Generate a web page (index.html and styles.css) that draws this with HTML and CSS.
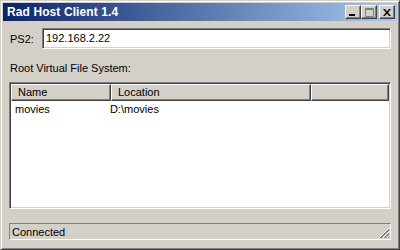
FILE: index.html
```html
<!DOCTYPE html>
<html lang="en">
<head>
    <meta charset="UTF-8">
    <title>Rad Host Client 1.4</title>
    <link rel="stylesheet" href="styles.css">
</head>
<body>
    <div class="window">
        <div class="titlebar">
            <span class="title">Rad Host Client 1.4</span>
            <div class="caption-btns">
                <div class="cap-btn">
                    <svg width="8" height="8" viewBox="0 0 8 8"><rect x="0" y="6" width="6" height="2" fill="#000"/></svg>
                </div>
                <div class="cap-btn">
                    <svg width="9" height="9" viewBox="0 0 9 9"><path d="M0.5 0.5h8v8h-8z M0 1.5h9" fill="none" stroke="#808080" stroke-width="1"/></svg>
                </div>
                <div class="cap-btn close">
                    <svg width="8" height="7" viewBox="0 0 8 7"><path d="M0 0h2l2 2.5 2-2.5h2l-3 3.5 3 3.5h-2l-2-2.5-2 2.5h-2l3-3.5z" fill="#000"/></svg>
                </div>
            </div>
        </div>

        <div class="content">
            <div class="ps2-row">
                <label class="ps2-label">PS2:</label>
                <div class="field">192.168.2.22</div>
            </div>

            <div class="section-label">Root Virtual File System:</div>

            <div class="listview">
                <div class="lv-header">
                    <div class="lv-col col-name">Name</div>
                    <div class="lv-col col-loc">Location</div>
                    <div class="lv-col col-rest"></div>
                </div>
                <div class="lv-row">
                    <div class="cell cell-name">movies</div>
                    <div class="cell cell-loc">D:\movies</div>
                </div>
            </div>

            <div class="statusbar">
                <span class="status-text">Connected</span>
                <svg class="grip" width="12" height="12" viewBox="0 0 12 12">
                    <path d="M11 1L1 11M11 5L5 11M11 9L9 11" stroke="#fff" stroke-width="1"/>
                    <path d="M11 2L2 11M11 3L3 11M11 6L6 11M11 7L7 11M11 10L10 11" stroke="#808080" stroke-width="1"/>
                </svg>
            </div>
        </div>
    </div>
</body>
</html>
```

FILE: styles.css
```css
body {
    margin: 0;
    font-family: 'Liberation Sans', Arial, sans-serif;
    font-size: 11px;
    color: #000;
    background: #d4d0c8;
}
.window {
    width: 400px;
    height: 250px;
    box-sizing: border-box;
    background: #d4d0c8;
    border: 1px solid;
    border-color: #d4d0c8 #404040 #404040 #d4d0c8;
    box-shadow: inset 1px 1px #fff, inset -1px -1px #808080;
    padding: 2px;
    display: flex;
    flex-direction: column;
}
.titlebar {
    height: 18px;
    background: linear-gradient(90deg, #0a246a, #a6caf0);
    display: flex;
    align-items: center;
    justify-content: space-between;
    padding: 0 2px 0 4px;
}
.title {
    color: #fff;
    font-weight: bold;
    font-size: 12px;
    letter-spacing: 0.1px;
}
.caption-btns {
    display: flex;
}
.cap-btn {
    width: 16px;
    height: 14px;
    box-sizing: border-box;
    background: #d4d0c8;
    border: 1px solid;
    border-color: #fff #404040 #404040 #fff;
    box-shadow: inset -1px -1px #808080;
    display: flex;
    align-items: center;
    justify-content: center;
}
.cap-btn.close {
    margin-left: 2px;
}
.content {
    flex: 1;
    padding: 7px 6px 0 6px;
    display: flex;
    flex-direction: column;
}
.ps2-row {
    display: flex;
    align-items: center;
    height: 21px;
}
.ps2-label {
    width: 33px;
    padding-left: 1px;
    box-sizing: border-box;
}
.field {
    flex: 1;
    height: 21px;
    box-sizing: border-box;
    background: #fff;
    border: 1px solid;
    border-color: #808080 #fff #fff #808080;
    box-shadow: inset 1px 1px #404040, inset -1px -1px #d4d0c8;
    padding: 0 3px;
    line-height: 19px;
}
.section-label {
    margin-top: 12px;
    line-height: 14px;
    padding-left: 1px;
}
.listview {
    margin-top: 7px;
    height: 127px;
    box-sizing: border-box;
    background: #fff;
    border: 1px solid;
    border-color: #808080 #fff #fff #808080;
    box-shadow: inset 1px 1px #404040, inset -1px -1px #d4d0c8;
    padding: 1px;
}
.lv-header {
    display: flex;
    height: 17px;
}
.lv-col {
    box-sizing: border-box;
    height: 17px;
    background: #d4d0c8;
    border: 1px solid;
    border-color: #fff #404040 #404040 #fff;
    box-shadow: inset -1px -1px #808080;
    padding-left: 6px;
    line-height: 15px;
}
.col-name {
    width: 100px;
}
.col-loc {
    width: 200px;
}
.col-rest {
    flex: 1;
}
.lv-row {
    display: flex;
    height: 16px;
    line-height: 16px;
}
.cell-name {
    width: 95px;
    padding-left: 4px;
}
.cell-loc {
    padding-left: 0;
}
.statusbar {
    margin-top: 14px;
    height: 17px;
    box-sizing: border-box;
    border: 1px solid;
    border-color: #808080 #fff #fff #808080;
    display: flex;
    align-items: center;
    justify-content: space-between;
    padding-left: 2px;
    position: relative;
}
.grip {
    position: absolute;
    right: 0;
    bottom: 0;
}
```
